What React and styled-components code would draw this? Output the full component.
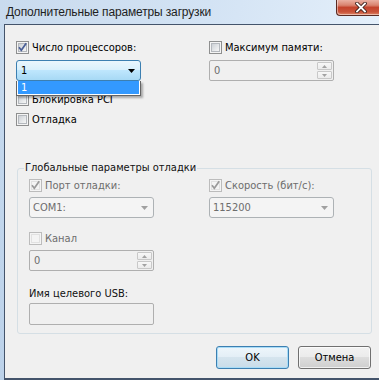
import styled, { createGlobalStyle } from "styled-components";

const GlobalStyle = createGlobalStyle`
  html, body {
    margin: 0;
    padding: 0;
  }
  body {
    width: 379px;
    height: 380px;
    overflow: hidden;
    background: #f0f0f0;
    font-family: "DejaVu Sans Condensed", "Liberation Sans", sans-serif;
    font-size: 11px;
    color: #000;
  }
`;

const Window = styled.div`
  width: 379px;
  height: 380px;
  display: flex;
  flex-direction: column;
  background: linear-gradient(180deg, #c8dbef 0%, #bcd2ea 100%);
`;

const TitleBar = styled.div`
  height: 24px;
  flex: none;
  display: flex;
  align-items: flex-start;
  background: linear-gradient(100deg, #c9dbee 0%, #d3e3f4 55%, #e4effa 100%);
`;

const Title = styled.div`
  padding: 4px 0 0 6px;
  font-family: "Liberation Sans", "Noto Sans", sans-serif;
  font-size: 12px;
  letter-spacing: -0.15px;
  line-height: 16px;
  color: #1e1e1e;
  white-space: nowrap;
`;

const Close = styled.div`
  margin-left: auto;
  width: 43px;
  height: 16px;
  box-sizing: border-box;
  border: 1px solid #5a2a22;
  border-top: none;
  border-right: none;
  border-bottom-left-radius: 4px;
  background: linear-gradient(180deg, #eab0a2 0%, #d9836f 35%, #c4442d 50%, #c9543a 80%, #e0896b 100%);
  box-shadow: inset 1px -1px 0 rgba(255, 255, 255, 0.45);
  display: flex;
  align-items: center;
  justify-content: flex-end;
  padding-right: 12px;
`;

const Frame = styled.div`
  flex: 1;
  display: flex;
`;

const FrameEdge = styled.div`
  width: 4px;
  flex: none;
`;

const Body = styled.div`
  flex: 1;
  box-sizing: border-box;
  background: #f0f0f0;
  border-top: 1px solid #44546b;
  border-left: 1px solid #44546b;
  border-bottom: 2px solid #44546b;
  padding: 16px 7px 0 11px;
  display: flex;
  flex-direction: column;
`;

const Columns = styled.div`
  display: grid;
  grid-template-columns: ${(p) => p.$first}px 1fr;
  padding-top: ${(p) => p.$top || 0}px;
`;

const Column = styled.div`
  display: flex;
  flex-direction: column;
  align-items: flex-start;
`;

const CheckRow = styled.label`
  display: flex;
  align-items: center;
  gap: 3px;
  height: 13px;
  margin-top: ${(p) => p.$mt || 0}px;
  color: ${(p) => (p.$disabled ? "#6d6d6d" : "#000")};
  white-space: nowrap;
  line-height: 16px;
`;

const Box = styled.span`
  position: relative;
  width: 13px;
  height: 13px;
  flex: none;
  box-sizing: border-box;
  border: 1px solid ${(p) => (p.$disabled ? "#bcbcbc" : "#8e8f8f")};
  background: #f4f4f4;
  padding: 1px;
  display: flex;
`;

const BoxInner = styled.span`
  flex: 1;
  border: 1px solid ${(p) => (p.$disabled ? "#e1e1e1" : "#b4b8bd")};
  background: ${(p) =>
    p.$disabled
      ? "#f4f4f4"
      : "linear-gradient(135deg, #cdd1d6 0%, #e6e8ea 60%, #f6f6f6 100%)"};
`;

const Tick = styled.svg`
  position: absolute;
  left: 0;
  top: 0;
`;

function Check({ checked, disabled, label, mt }) {
  return (
    <CheckRow $mt={mt} $disabled={disabled}>
      <Box $disabled={disabled}>
        <BoxInner $disabled={disabled} />
        {checked && (
          <Tick width="11" height="11" viewBox="0 0 11 11">
            <path
              d="M2 5.2 L4.3 8.2 L9.2 1.2"
              fill="none"
              stroke={disabled ? "#9a9a9a" : "#4a5f97"}
              strokeWidth="1.7"
            />
          </Tick>
        )}
      </Box>
      {label}
    </CheckRow>
  );
}

const ComboWrap = styled.div`
  position: relative;
  margin-top: ${(p) => p.$mt || 0}px;
`;

const Combo = styled.div`
  width: 125px;
  height: 21px;
  box-sizing: border-box;
  border: 1px solid ${(p) => (p.$hot ? "#3c7fb1" : "#adb2b5")};
  border-radius: 3px;
  background: ${(p) =>
    p.$hot
      ? "linear-gradient(180deg, #eaf6fd 0%, #d9f0fc 45%, #bee6fd 50%, #a7d9f5 100%)"
      : "#f4f4f4"};
  color: ${(p) => (p.$hot ? "#000" : "#6d6d6d")};
  display: flex;
  align-items: center;
  justify-content: space-between;
  padding: 0 5px 0 ${(p) => (p.$hot ? 4 : 3)}px;
  line-height: 16px;
`;

const DropList = styled.div`
  position: absolute;
  left: 0;
  top: 21px;
  width: 125px;
  box-sizing: border-box;
  border: 1px solid #646464;
  border-top: none;
  background: #fff;
  box-shadow: 2px 2px 2px rgba(0, 0, 0, 0.3);
  z-index: 2;
`;

const DropItem = styled.div`
  height: 13px;
  margin: 0 1px 1px;
  background: #3399ff;
  color: #fff;
  line-height: 13px;
  padding-left: 3px;
`;

function Arrow({ color }) {
  return (
    <svg width="7" height="4" viewBox="0 0 7 4">
      <path d="M0 0 H7 L3.5 4 Z" fill={color} />
    </svg>
  );
}

const Edit = styled.div`
  width: 125px;
  height: ${(p) => p.$h || 21}px;
  box-sizing: border-box;
  margin-top: ${(p) => p.$mt || 0}px;
  border: 1px solid #afafaf;
  border-radius: 2px;
  background: #f0f0f0;
  color: #6d6d6d;
  display: flex;
  align-items: center;
  justify-content: space-between;
  padding: 0 1px 0 4px;
  line-height: 16px;
`;

const SpinButtons = styled.div`
  display: flex;
  flex-direction: column;
  gap: 1px;
`;

const SpinButton = styled.div`
  width: 15px;
  height: 8px;
  box-sizing: border-box;
  border: 1px solid #c8c8c8;
  border-radius: 1px;
  background: linear-gradient(180deg, #f7f7f7, #ebebeb);
  display: flex;
  align-items: center;
  justify-content: center;
`;

function Spin({ value, mt }) {
  return (
    <Edit $mt={mt}>
      {value}
      <SpinButtons>
        <SpinButton>
          <svg width="5" height="3" viewBox="0 0 5 3">
            <path d="M0 3 H5 L2.5 0 Z" fill="#a2a2a2" />
          </svg>
        </SpinButton>
        <SpinButton>
          <svg width="5" height="3" viewBox="0 0 5 3">
            <path d="M0 0 H5 L2.5 3 Z" fill="#a2a2a2" />
          </svg>
        </SpinButton>
      </SpinButtons>
    </Edit>
  );
}

const Group = styled.fieldset`
  margin: 34px 0 0 1px;
  padding: 0 0 8px 11px;
  border: 1px solid #d5dfe5;
  border-radius: 3px;
  min-width: 0;
`;

const Legend = styled.legend`
  margin-left: -5px;
  padding: 0 1px;
  line-height: 16px;
  color: #111;
`;

const FieldLabel = styled.div`
  margin-top: 15px;
  line-height: 16px;
  color: #111;
`;

const Buttons = styled.div`
  display: flex;
  justify-content: flex-end;
  gap: 9px;
  margin-top: 12px;
  padding-right: 1px;
`;

const Button = styled.button`
  width: 73px;
  height: 23px;
  box-sizing: border-box;
  padding: 0;
  border: 1px solid ${(p) => (p.$default ? "#3c7fb1" : "#707070")};
  border-radius: 3px;
  background: ${(p) =>
    p.$default
      ? "linear-gradient(180deg, #eef6fb 0%, #e3eef6 49%, #d5e4ee 50%, #c9dce9 100%)"
      : "linear-gradient(180deg, #f2f2f2 0%, #ebebeb 49%, #dddddd 50%, #cfcfcf 100%)"};
  box-shadow: inset 0 0 0 1px ${(p) => (p.$default ? "#a8dcf7" : "rgba(255,255,255,0.7)")};
  font-family: "DejaVu Sans Condensed", "Liberation Sans", sans-serif;
  font-size: 11px;
  color: #000;
`;

export default function App() {
  return (
    <>
      <GlobalStyle />
      <Window>
        <TitleBar>
          <Title>Дополнительные параметры загрузки</Title>
          <Close>
            <svg width="12" height="11" viewBox="0 0 12 11">
              <path d="M2 1.5 L10 9.5 M10 1.5 L2 9.5" stroke="#3b1f1a" strokeWidth="3.6" strokeLinecap="square" />
              <path d="M2 1.5 L10 9.5 M10 1.5 L2 9.5" stroke="#fff" strokeWidth="1.8" strokeLinecap="square" />
            </svg>
          </Close>
        </TitleBar>
        <Frame>
          <FrameEdge />
          <Body>
            <Columns $first={193}>
              <Column>
                <Check checked label="Число процессоров:" />
                <ComboWrap $mt={6}>
                  <Combo $hot>
                    1
                    <Arrow color="#000" />
                  </Combo>
                  <DropList>
                    <DropItem>1</DropItem>
                  </DropList>
                </ComboWrap>
                <Check label="Блокировка PCI" mt={12} />
                <Check label="Отладка" mt={7} />
              </Column>
              <Column>
                <Check label="Максимум памяти:" />
                <Spin value="0" mt={6} />
              </Column>
            </Columns>

            <Group>
              <Legend>Глобальные параметры отладки</Legend>
              <Columns $first={180} $top={3}>
                <Column>
                  <Check checked disabled label="Порт отладки:" />
                  <ComboWrap $mt={5}>
                    <Combo>
                      COM1:
                      <Arrow color="#a0a0a0" />
                    </Combo>
                  </ComboWrap>
                  <Check disabled label="Канал" mt={14} />
                  <Spin value="0" mt={5} />
                  <FieldLabel>Имя целевого USB:</FieldLabel>
                  <Edit $h={22} $mt={1} />
                </Column>
                <Column>
                  <Check checked disabled label="Скорость (бит/с):" />
                  <ComboWrap $mt={5}>
                    <Combo>
                      115200
                      <Arrow color="#a0a0a0" />
                    </Combo>
                  </ComboWrap>
                </Column>
              </Columns>
            </Group>

            <Buttons>
              <Button $default>OK</Button>
              <Button>Отмена</Button>
            </Buttons>
          </Body>
        </Frame>
      </Window>
    </>
  );
}
